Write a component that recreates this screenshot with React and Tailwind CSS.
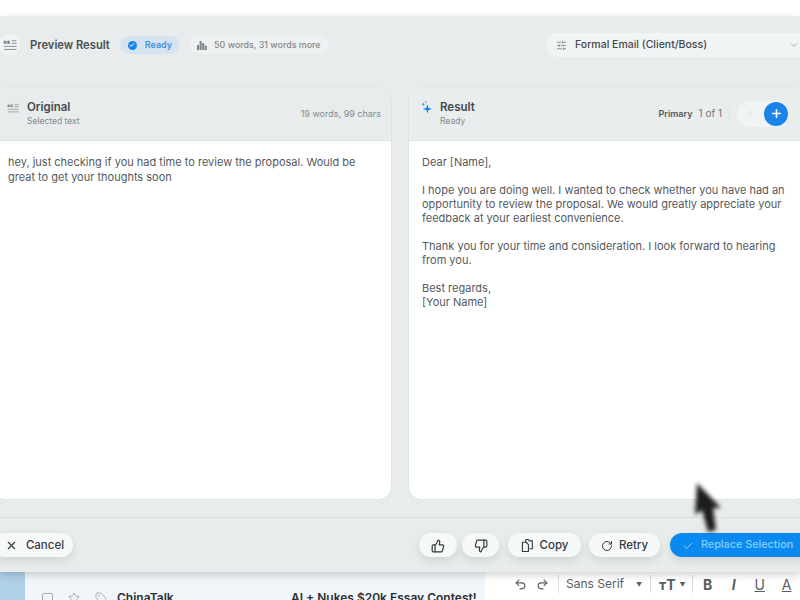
import React from 'react';
import { Check, ChevronDown, ChevronLeft, Plus, Redo2, RotateCw, SlidersHorizontal, Star, Tag, ThumbsDown, ThumbsUp, Undo2, X } from 'lucide-react';

const QuoteLines = ({ className }) => (
  <svg viewBox="0 0 16 14" className={className} fill="none" stroke="currentColor">
    <path d="M1 2.2h2.6v2.6H1zM1.2 2.4L3 0.8M5 2.2h2.6v2.6H5zM5.2 2.4L7 0.8" fill="currentColor" strokeWidth="0.6" />
    <path d="M10 1.5h5.5M10 4.5h5.5M1 8h14.5M1 11.5h14.5" strokeWidth="1" />
  </svg>
);

const ResultSpark = () => (
  <svg viewBox="0 0 12 14" className="mt-[1px] h-[13px] w-[11px] text-[#1b84ea]" fill="currentColor">
    <path d="M7 3.5 L8.2 7.3 L12 8.5 L8.2 9.7 L7 13.5 L5.8 9.7 L2 8.5 L5.8 7.3 Z" />
    <path d="M2.5 1.5 L3 3 L4.5 3.5 L3 4 L2.5 5.5 L2 4 L0.5 3.5 L2 3 Z" />
    <circle cx="5.2" cy="1" r="0.7" />
  </svg>
);

const WordBars = () => (
  <svg viewBox="0 0 10 10" className="h-[10px] w-[10px] text-[#7d8285]" fill="currentColor">
    <rect x="0" y="5" width="2" height="5" />
    <rect x="2.6" y="1" width="2" height="9" />
    <rect x="5.2" y="3" width="2" height="7" />
    <rect x="7.8" y="5.5" width="2" height="4.5" />
  </svg>
);

const PagesIcon = () => (
  <svg viewBox="0 0 14 16" className="h-[15px] w-[13px]" fill="none" stroke="currentColor" strokeWidth="1.2" strokeLinejoin="round">
    <path d="M5 1.5h3l1 1.5h3.2v8.5H9" />
    <path d="M1.5 4.5h4l2.5 2.5v7.5H1.5z" />
    <path d="M5 1.5v3" />
  </svg>
);

const PillButton = ({ children, className = '' }) => (
  <button className={`flex h-[24px] items-center justify-center rounded-full bg-[#f7f9f9] pt-[1px] text-[11.5px] font-medium text-[#34393d] shadow-[0_4px_10px_rgba(0,0,0,0.10)] ${className}`}>
    {children}
  </button>
);

const App = () => {
  return (
    <div className="relative flex h-[600px] w-[800px] flex-col overflow-hidden bg-white font-['Inter','Liberation_Sans',sans-serif]">
      <div className="h-4 shrink-0 bg-white"></div>

      <div className="z-10 flex h-[556px] shrink-0 flex-col bg-[#e8ecec] shadow-[0_3px_8px_rgba(0,0,0,0.18)]">
        <div className="flex h-[70px] shrink-0 items-start justify-between pt-[17px]">
          <div className="flex h-6 items-center">
            <div className="ml-[-1px] flex h-[22px] w-[21px] items-center justify-center rounded-full bg-[#f1f4f4]">
              <QuoteLines className="h-[13px] w-[14px] text-[#7d8285]" />
            </div>
            <h1 className="ml-[10px] text-[11.2px] font-semibold text-[#4a4f53]">Preview Result</h1>
            <span className="ml-[10px] flex h-[18px] items-center rounded-full bg-[#d6e4f1] px-[8px] text-[9px] font-semibold text-[#3f90e3]">
              <span className="mr-[8px] flex h-[9px] w-[9px] items-center justify-center rounded-full bg-[#1b84ea]">
                <Check size={6} strokeWidth={4} className="text-white" />
              </span>
              Ready
            </span>
            <span className="ml-[9px] flex h-[18px] items-center gap-[7px] rounded-full bg-[#edf1f1] px-[8px] text-[8.9px] font-medium text-[#84888b]">
              <WordBars />
              50 words, 31 words more
            </span>
          </div>
          <div className="flex h-[24px] w-[254px] items-center rounded-l-full bg-[#f0f4f4] pl-[10px] pr-[1px]">
            <SlidersHorizontal size={11} className="text-[#85898c]" />
            <span className="ml-[8px] flex-1 text-[10.5px] font-medium text-[#45494d]">Formal Email (Client/Boss)</span>
            <ChevronDown size={10} className="text-[#9aa0a3]" />
          </div>
        </div>

        <div className="flex h-[414px] shrink-0 gap-[16px]">
          <section className="ml-[-8px] flex w-[400px] shrink-0 flex-col overflow-hidden rounded-[13px] border border-[#dfe4e4] bg-white">
            <div className="flex h-[54px] shrink-0 items-center justify-between border-b border-[#dde2e2] bg-[#e8ecec] pl-[14px] pr-[10px]">
              <div className="flex items-start">
                <QuoteLines className="mt-[3px] h-[11px] w-[12px] text-[#878c8f]" />
                <div className="ml-[8px]">
                  <div className="text-[11.5px] font-semibold leading-[15px] text-[#45494d]">Original</div>
                  <div className="text-[8.5px] leading-[12px] text-[#85898c]">Selected text</div>
                </div>
              </div>
              <span className="text-[9px] text-[#85898c]">19 words, 99 chars</span>
            </div>
            <div className="px-[15px] pt-[14px] text-[11px] leading-[14.5px] text-[#55595d]">
              hey, just checking if you had time to review the proposal. Would be great to get your thoughts soon
            </div>
          </section>

          <section className="flex w-[400px] shrink-0 flex-col overflow-hidden rounded-[13px] border border-[#dfe4e4] bg-white">
            <div className="flex h-[54px] shrink-0 items-center justify-between border-b border-[#dde2e2] bg-[#e9eded] pl-[12px] pr-[18px]">
              <div className="flex items-start">
                <ResultSpark />
                <div className="ml-[8px]">
                  <div className="text-[11.5px] font-semibold leading-[15px] text-[#45494d]">Result</div>
                  <div className="text-[8.5px] leading-[12px] text-[#85898c]">Ready</div>
                </div>
              </div>
              <div className="flex items-center">
                <span className="text-[9px] font-semibold text-[#55595d]">Primary</span>
                <span className="ml-[6px] text-[10px] text-[#6f7478]">1 of 1</span>
                <span className="ml-[7px] h-[16px] w-px bg-[#dde2e2]"></span>
                <div className="ml-[7px] flex h-[26px] w-[52px] items-center justify-between rounded-full bg-[#f0f4f4] pl-[8px] pr-[1px]">
                  <ChevronLeft size={11} className="text-[#cfd4d6]" />
                  <span className="flex h-[24px] w-[24px] items-center justify-center rounded-full bg-[#1b84ea]">
                    <Plus size={13} strokeWidth={3} className="text-white" />
                  </span>
                </div>
              </div>
            </div>
            <div className="space-y-[14px] px-[13px] pt-[14px] text-[11px] leading-[14px] text-[#55595d]">
              <p>Dear [Name],</p>
              <p>I hope you are doing well. I wanted to check whether you have had an opportunity to review the proposal. We would greatly appreciate your feedback at your earliest convenience.</p>
              <p>Thank you for your time and consideration. I look forward to hearing from you.</p>
              <p>Best regards,<br />[Your Name]</p>
            </div>
          </section>
        </div>

        <div className="mt-[17px] flex flex-1 items-start justify-between border-t border-[#d8dddd] pt-[15px]">
          <PillButton className="ml-[-8px] w-[81px] gap-[8px] pl-[4px]">
            <X size={13} />
            Cancel
          </PillButton>
          <div className="flex items-center">
            <PillButton className="w-[38px]"><ThumbsUp size={14} /></PillButton>
            <PillButton className="ml-[5px] w-[37px]"><ThumbsDown size={14} /></PillButton>
            <PillButton className="ml-[9px] w-[73px] gap-[6px]"><PagesIcon />Copy</PillButton>
            <PillButton className="ml-[8px] w-[71px] gap-[6px]"><RotateCw size={12} />Retry</PillButton>
            <button className="ml-[10px] mr-[-6px] flex h-[24px] w-[136px] items-center gap-[7px] rounded-l-full bg-[#0a8af0] pl-[12px] pt-[1px] text-[10.8px] font-medium text-[#82cffb] shadow-[0_4px_10px_rgba(0,0,0,0.10)]">
              <Check size={12} />
              Replace Selection
            </button>
          </div>
        </div>
      </div>

      <div className="flex min-h-0 flex-1 overflow-hidden">
        <div className="w-[25px] shrink-0 bg-[#b0d0e8]"></div>
        <div className="flex w-[460px] shrink-0 items-center bg-[#f0f6fa] pl-[17px] pt-[24px] text-[12px] font-semibold text-[#2b2f33]">
          <span className="h-[11px] w-[11px] shrink-0 rounded-[2px] border border-[#a8adb0]"></span>
          <Star size={12} className="ml-[15px] shrink-0 text-[#a8adb0]" />
          <Tag size={12} className="ml-[15px] shrink-0 text-[#a8adb0]" />
          <span className="ml-[10px] w-[174px] shrink-0">ChinaTalk</span>
          <span className="whitespace-nowrap">AI + Nukes $20k Essay Contest!</span>
        </div>
        <div className="flex flex-1 items-center bg-white pb-[4px] pl-[29px] text-[12px] text-[#5a5e62]">
          <Undo2 size={13} />
          <Redo2 size={13} className="ml-[9px]" />
          <span className="ml-[9px] h-[18px] w-px bg-[#d8dddd]"></span>
          <span className="ml-[7px]">Sans Serif</span>
          <span className="ml-[12px] text-[6px]">▼</span>
          <span className="ml-[8px] h-[18px] w-px bg-[#d8dddd]"></span>
          <span className="ml-[8px] text-[14px] font-bold">тT</span>
          <span className="ml-[4px] text-[6px]">▼</span>
          <span className="ml-[6px] h-[18px] w-px bg-[#d8dddd]"></span>
          <span className="ml-[8px] w-[14px] text-center text-[14px] font-bold">B</span>
          <span className="ml-[12px] w-[14px] text-center text-[14px] font-bold italic">I</span>
          <span className="ml-[12px] w-[14px] text-center text-[14px] underline">U</span>
          <span className="ml-[13px] w-[14px] text-center text-[14px] underline">A</span>
        </div>
      </div>

      {/* mouse pointer over the result card */}
      <svg viewBox="0 0 28 52" className="absolute left-[694px] top-[482px] z-20 h-[52px] w-[28px] blur-[2px]">
        <path d="M3 1 L1 33 L8 28 L14 50 L22 48 L19 26 L27 26 Z" fill="#1c1c1e" />
      </svg>
    </div>
  );
};

export default App;
